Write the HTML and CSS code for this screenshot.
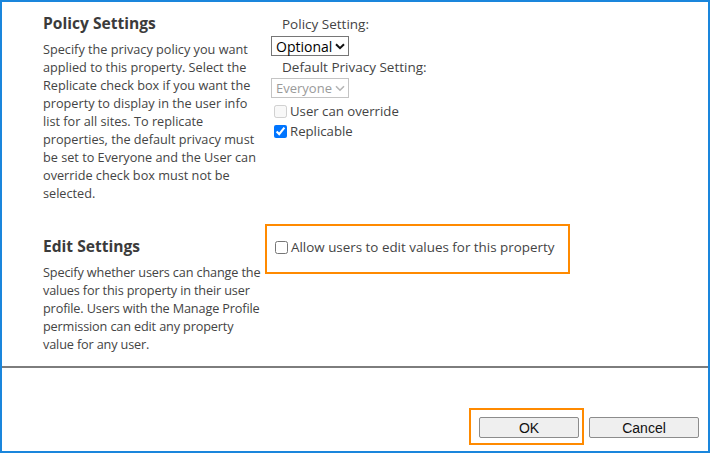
FILE: index.html
```html
<!DOCTYPE html>
<html>
<head>
<meta charset="utf-8">
<link rel="stylesheet" href="styles.css">
</head>
<body>
<div class="frame">
  <div class="section policy">
    <div class="info">
      <h3 class="title">Policy Settings</h3>
      <p class="desc">Specify the privacy policy you want applied to this property. Select the Replicate check box if you want the property to display in the user info list for all sites. To replicate properties, the default privacy must be set to Everyone and the User can override check box must not be selected.</p>
    </div>
    <div class="controls">
      <div class="label">Policy Setting:</div>
      <div class="select">
        <span class="value">Optional</span>
        <svg class="chev" width="10" height="7" viewBox="0 0 10 7"><path d="M1 1.2 L5 5.2 L9 1.2" fill="none" stroke="currentColor" stroke-width="2"/></svg>
      </div>
      <div class="label">Default Privacy Setting:</div>
      <div class="select disabled">
        <span class="value">Everyone</span>
        <svg class="chev" width="10" height="7" viewBox="0 0 10 7"><path d="M1 1.2 L5 5.2 L9 1.2" fill="none" stroke="currentColor" stroke-width="1.6"/></svg>
      </div>
      <label class="check disabled"><input type="checkbox" disabled><span>User can override</span></label>
      <label class="check"><input type="checkbox" checked><span>Replicable</span></label>
    </div>
  </div>

  <div class="section edit">
    <div class="info">
      <h3 class="title">Edit Settings</h3>
      <p class="desc">Specify whether users can change the values for this property in their user profile. Users with the Manage Profile permission can edit any property value for any user.</p>
    </div>
    <div class="controls">
      <div class="highlight edit-box">
        <label class="check"><input type="checkbox"><span>Allow users to edit values for this property</span></label>
      </div>
    </div>
  </div>

  <div class="sep"></div>

  <div class="footer">
    <span class="highlight ok-box"><button class="btn ok">OK</button></span>
    <button class="btn cancel">Cancel</button>
  </div>
</div>
</body>
</html>
```

FILE: styles.css
```css
html, body {
  margin: 0;
  padding: 0;
  background: #ffffff;
}

.frame {
  box-sizing: border-box;
  width: 710px;
  height: 453px;
  border: 2px solid #1a86dc;
  font-family: "Open Sans", "Noto Sans", sans-serif;
  color: #444444;
  overflow: hidden;
}

.section {
  display: grid;
  grid-template-columns: 221px 1fr;
  column-gap: 7px;
  padding-left: 41px;
  align-items: start;
}

.policy {
  padding-top: 11px;
}

.edit {
  margin-top: 22px;
}

.edit .info {
  padding-top: 12px;
}

.title {
  margin: 0;
  font-size: 15.6px;
  line-height: 20px;
  font-weight: 700;
  color: #3b3b3b;
}

.desc {
  margin: 7px 0 0 0;
  font-size: 12.7px;
  line-height: 18px;
  color: #444444;
}

.edit .desc {
  letter-spacing: -0.15px;
}

.controls {
  display: flex;
  flex-direction: column;
  align-items: flex-start;
}

.label {
  font-size: 13.5px;
  line-height: 18px;
  padding-left: 11px;
  color: #444444;
}

.policy .controls {
  padding-top: 2px;
}

.select {
  box-sizing: border-box;
  display: inline-flex;
  align-items: center;
  height: 20px;
  padding: 0 3px 0 4px;
  gap: 3px;
  border: 1px solid #767676;
  font-size: 14px;
  color: #000000;
  margin: 3px 0 2px 0;
}

.select .chev {
  color: #111111;
}

.select.disabled {
  border-color: #c4c4c4;
  color: #9a9a9a;
  font-size: 13px;
  margin-top: 2px;
}

.select.disabled .chev {
  color: #b5b5b5;
}

.check {
  display: flex;
  align-items: center;
  font-size: 13.2px;
  line-height: 18px;
  margin-top: 2px;
  color: #444444;
}

.check input {
  margin: 0 3px 0 3px;
  width: 13px;
  height: 13px;
}

.highlight {
  border: 2px solid #ff8a00;
}

.edit-box {
  box-sizing: border-box;
  width: 305px;
  height: 50px;
  margin-left: -6px;
  padding: 12px 0 0 5px;
}

.edit-box .check {
  margin-top: 0;
  font-size: 13.4px;
}

.sep {
  margin-top: 13px;
  height: 0;
  border-top: 2px solid #7d7d7d;
}

.footer {
  display: flex;
  justify-content: flex-end;
  align-items: flex-start;
  padding: 40px 9px 0 0;
}

.ok-box {
  display: block;
  padding: 7px 3px 5px 8px;
  margin-right: 5px;
}

.btn {
  box-sizing: border-box;
  height: 21px;
  border: 1px solid #8c8c8c;
  border-radius: 2px;
  background: #efefef;
  font-family: "Liberation Sans", Arial, sans-serif;
  font-size: 14px;
  color: #111111;
  padding: 0;
  display: block;
}

.ok {
  width: 100px;
}

.cancel {
  width: 110px;
  margin-top: 9px;
}
```
